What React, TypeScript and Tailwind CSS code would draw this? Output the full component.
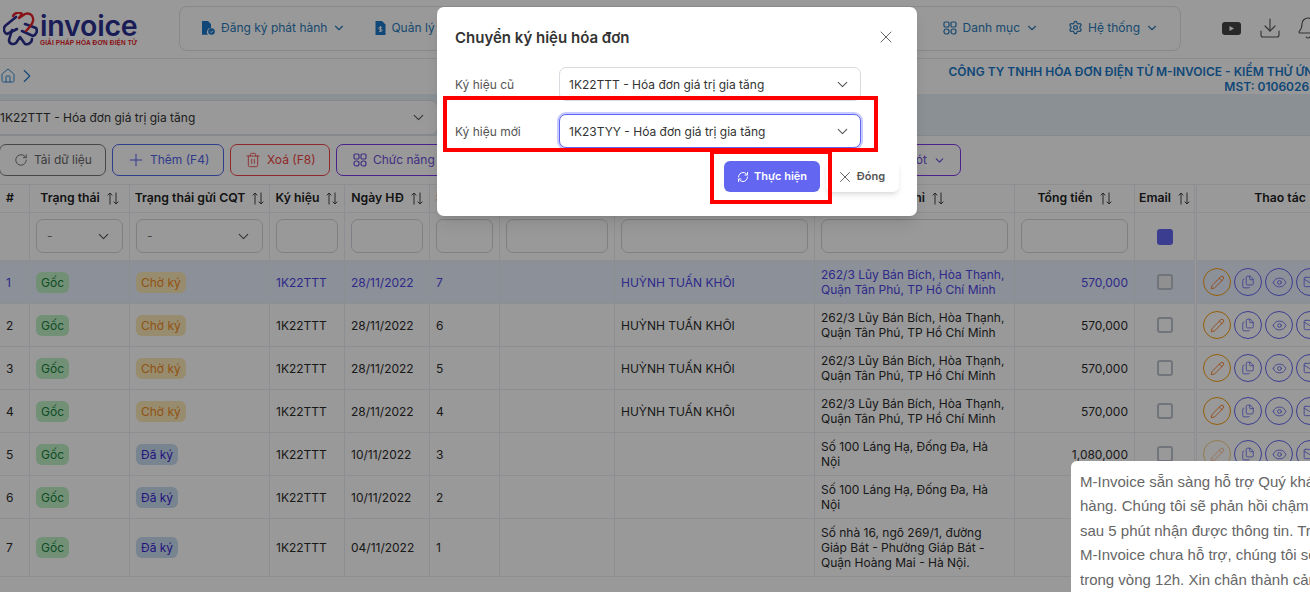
import React from "react";
import { ChevronDown, ChevronRight, Settings, Download, Bell, House, RotateCw, Plus, Trash2, Pencil, Files, Eye, Mail, RefreshCw, X } from "lucide-react";

const GRID = "grid grid-cols-[30px_100px_140px_75px_85px_70px_115px_200px_200px_120px_60px_169px] w-[1364px]";
const CELL = "border-r border-b border-[#e9edf3] px-[6px] flex items-center min-w-0";

function Sort() {
  return (
    <svg width="12" height="13" viewBox="0 0 12 13" fill="none" stroke="currentColor" strokeWidth="1" className="shrink-0 text-[#444]">
      <path d="M3 12.500V1M0.700 3.400 3 1l2.300 2.400" />
      <path d="M9 .5V12M6.700 9.600 9 12l2.300-2.400" />
    </svg>
  );
}

function Grid4({ className = "" }: { className?: string }) {
  return (
    <svg width="14" height="14" viewBox="0 0 14 14" fill="none" stroke="currentColor" strokeWidth="1.200" className={`shrink-0 ${className}`}>
      <rect x="1" y="1" width="5" height="5" rx="1.200" />
      <rect x="8" y="1" width="5" height="5" rx="1.200" />
      <rect x="1" y="8" width="5" height="5" rx="2.200" />
      <rect x="8" y="8" width="5" height="5" rx="2.200" />
    </svg>
  );
}

function FileCheckSolid() {
  return (
    <svg width="14" height="14" viewBox="0 0 14 14" className="text-[#1a78c8]">
      <path fill="currentColor" d="M1 0h6l3 3v4a4 4 0 0 0-3 6.800H1z" />
      <circle cx="10.500" cy="10.500" r="3.300" fill="currentColor" />
      <path d="M9 10.500l1.100 1.100 2-2" stroke="#fff" strokeWidth="1" fill="none" />
    </svg>
  );
}

function FileDollar() {
  return (
    <svg width="11" height="14" viewBox="0 0 11 14" className="text-[#1a78c8]">
      <path fill="currentColor" d="M1 0h6l3.500 3.500V14H.5V0z" />
      <path d="M5.500 5v6M7 6.300H4.800a1 1 0 0 0 0 2h1.400a1 1 0 0 1 0 2H4" stroke="#fff" strokeWidth=".9" fill="none" />
    </svg>
  );
}

function Logo() {
  return (
    <div className="flex items-center w-[179px] pl-[3px] shrink-0">
      <svg width="35" height="34" viewBox="0 0 35 34" fill="none" strokeLinecap="round" strokeLinejoin="round" className="shrink-0">
        <path d="M13 5 2 14c-2 3-1 7 2 8l10-5" stroke="#2b2f8f" strokeWidth="2.600" />
        <path d="M9 18 6 28c0 4 4 5 7 3l4-6 5 7c4 1 7-2 7-5" stroke="#2b2f8f" strokeWidth="2.600" />
        <path d="M22 12l11 4c2 3 0 7-3 8l-11-5" stroke="#2b2f8f" strokeWidth="2.600" />
        <path d="M10 4c2-4 7-4 9-2l-3 4 6-4c5-2 9 2 8 7-1 4-4 7-7 10" stroke="#e3202a" strokeWidth="2.400" />
      </svg>
      <div className="flex flex-col ml-[2px] mt-[3px]">
        <span className="font-semibold text-[28.500px] leading-[22px] tracking-[-0.2px] text-[#2b2f8f]">invoice</span>
        <span className="font-['Liberation_Sans',sans-serif] font-bold text-[6.500px] leading-[9px] tracking-[0.12px] text-[#e3202a] whitespace-nowrap mt-[1px]">GIẢI PHÁP HÓA ĐƠN ĐIỆN TỬ</span>
      </div>
    </div>
  );
}

function Nav({ icon, label }: { icon: React.ReactNode; label: string }) {
  return (
    <div className="flex items-center text-[12px] text-[#2a7ab8] whitespace-nowrap">
      <span className="w-[20px] flex">{icon}</span>
      <span>{label}</span>
      <ChevronDown size={14} className="ml-[5px] shrink-0" />
    </div>
  );
}

function Btn({ cls, icon, label }: { cls: string; icon: React.ReactNode; label: string }) {
  return (
    <div className={`h-[32px] border rounded-[7px] flex items-center text-[12px] whitespace-nowrap shrink-0 ${cls}`}>
      {icon}
      <span>{label}</span>
    </div>
  );
}

function SelectBox({ text, focus }: { text: string; focus?: boolean }) {
  return (
    <div className={`w-[302px] h-[34px] rounded-[7px] border bg-white flex items-center justify-between pl-[9px] pr-[9px] text-[12px] text-[#333] ${focus ? "border-[#6366f1] ring-2 ring-[#c7cbff]" : "border-[#d8dbe0]"}`}>
      <span className="whitespace-nowrap pt-[1px]">{text}</span>
      <ChevronDown size={17} strokeWidth={1.500} className="text-[#555] shrink-0" />
    </div>
  );
}

function Head({ label, left, right }: { label?: string; left?: boolean; right?: boolean }) {
  return (
    <div className={`${CELL} h-[28px] font-semibold text-[12.250px] text-[#222] gap-[7px] whitespace-nowrap ${left ? "" : "justify-center"} ${right ? "ml-[1px] border-l" : ""}`}>
      <span>{label}</span>
      {label && !left && !right && <Sort />}
    </div>
  );
}

function FilterInput({ select }: { select?: boolean }) {
  return (
    <div className={`${CELL} h-[48px] pb-[1px]`}>
      <div className="w-full h-[34px] rounded-[7px] border border-[#d3d6db] bg-white flex items-center justify-between px-[10px] text-[#777] text-[12px]">
        {select && <span>-</span>}
        {select && <ChevronDown size={17} strokeWidth={1.500} className="text-[#555] shrink-0" />}
      </div>
    </div>
  );
}

function Badge({ text, cls }: { text: string; cls: string }) {
  return <span className={`h-[21px] px-[5px] rounded-[6px] flex items-center text-[12px] whitespace-nowrap ${cls}`}>{text}</span>;
}

function Action({ children, orange, faded }: { children: React.ReactNode; orange?: boolean; faded?: boolean }) {
  return (
    <span className={`w-[28px] h-[28px] shrink-0 rounded-full border flex items-center justify-center ${orange ? "border-[#f59e0b] text-[#f97316]" : "border-[#6366f1] text-[#6366f1]"} ${faded ? "opacity-50" : ""}`}>
      {children}
    </span>
  );
}

const rows = [
  { n: 1, s: "cho", d: "28/11/2022", so: 7, name: "HUỲNH TUẤN KHÔI", addr: "262/3 Lũy Bán Bích, Hòa Thạnh, Quận Tân Phú, TP Hồ Chí Minh", total: "570,000", h: "h-[43px]" },
  { n: 2, s: "cho", d: "28/11/2022", so: 6, name: "HUỲNH TUẤN KHÔI", addr: "262/3 Lũy Bán Bích, Hòa Thạnh, Quận Tân Phú, TP Hồ Chí Minh", total: "570,000", h: "h-[43px]" },
  { n: 3, s: "cho", d: "28/11/2022", so: 5, name: "HUỲNH TUẤN KHÔI", addr: "262/3 Lũy Bán Bích, Hòa Thạnh, Quận Tân Phú, TP Hồ Chí Minh", total: "570,000", h: "h-[43px]" },
  { n: 4, s: "cho", d: "28/11/2022", so: 4, name: "HUỲNH TUẤN KHÔI", addr: "262/3 Lũy Bán Bích, Hòa Thạnh, Quận Tân Phú, TP Hồ Chí Minh", total: "570,000", h: "h-[43px]" },
  { n: 5, s: "da", d: "10/11/2022", so: 3, name: "", addr: "Số 100 Láng Hạ, Đống Đa, Hà Nội", total: "1,080,000", h: "h-[43px]" },
  { n: 6, s: "da", d: "10/11/2022", so: 2, name: "", addr: "Số 100 Láng Hạ, Đống Đa, Hà Nội", total: "", h: "h-[43px]" },
  { n: 7, s: "da", d: "04/11/2022", so: 1, name: "", addr: "Số nhà 16, ngõ 269/1, đường Giáp Bát - Phường Giáp Bát - Quận Hoàng Mai - Hà Nội.", total: "", h: "h-[58px]" },
];

function Row({ r }: { r: (typeof rows)[number] }) {
  const active = r.n === 1;
  const signed = r.s === "da";
  const c = `${CELL} ${r.h} ${active ? "bg-[#e9f0ff] text-[#4f46e5]" : ""}`;
  return (
    <div className={`${GRID} text-[12px] leading-[15px] text-[#2b2b2b]`}>
      <div className={c}>{r.n}</div>
      <div className={c}><Badge text="Gốc" cls="bg-[#bff0c4] text-[#15803d]" /></div>
      <div className={c}>
        {r.s === "cho" ? <Badge text="Chờ ký" cls="bg-[#fde9b8] text-[#f08a24]" /> : <Badge text="Đã ký" cls="bg-[#c8dcf0] text-[#3b1fd1]" />}
      </div>
      <div className={c}>1K22TTT</div>
      <div className={c}>{r.d}</div>
      <div className={c}>{r.so}</div>
      <div className={c}></div>
      <div className={c}>{r.name}</div>
      <div className={c}>{r.addr}</div>
      <div className={`${c} justify-end`}>{r.total}</div>
      <div className={`${c} justify-center`}>
        {!(r.n > 5) && <span className={`w-[16px] h-[16px] rounded-[3px] border-2 border-[#bcc2cb] ${active ? "bg-[#f0f0f0]" : "bg-white"}`} />}
      </div>
      <div className={`${c} ml-[1px] border-l gap-[3px] overflow-hidden`}>
        {r.n <= 5 && (
          <>
            <Action orange faded={signed}><Pencil size={15} strokeWidth={1.400} /></Action>
            <Action><Files size={14} strokeWidth={1.400} /></Action>
            <Action><Eye size={15} strokeWidth={1.400} /></Action>
            <Action><Mail size={14} strokeWidth={1.400} /></Action>
          </>
        )}
      </div>
    </div>
  );
}

export default function App() {
  return (
    <div className="relative w-[1310px] h-[592px] overflow-hidden bg-white font-[Inter,sans-serif]">
      <header className="h-[59px] flex items-start border-b border-[#e3e6ea]">
        <div className="h-[58px] flex items-center"><Logo /></div>
        <nav className="mt-[6px] h-[45px] w-[1002px] border border-[#dfe3e8] rounded-[8px] flex items-center justify-between pl-[21px] pr-[21px] pb-[2px] shrink-0">
          <div className="flex items-center gap-[29px]">
            <Nav icon={<FileCheckSolid />} label="Đăng ký phát hành" />
            <div className="flex items-center text-[12px] text-[#2a7ab8] whitespace-nowrap gap-[5px]"><FileDollar /><span>Quản lý hóa đơn</span></div>
          </div>
          <div className="flex items-center gap-[29px]">
            <Nav icon={<Grid4 />} label="Danh mục" />
            <Nav icon={<Settings size={15} className="shrink-0" />} label="Hệ thống" />
          </div>
        </nav>
        <div className="flex items-center ml-[41px] mt-[16px] text-[#555] shrink-0">
          <svg width="19" height="13" viewBox="0 0 19 13" className="shrink-0 mr-[17px]">
            <rect width="19" height="13" rx="3" fill="#444" />
            <path d="M7.500 4l4.500 2.500L7.500 9z" fill="#fff" />
          </svg>
          <Download size={24} strokeWidth={1.100} className="shrink-0 mr-[14px]" />
          <Bell size={24} strokeWidth={1.100} className="shrink-0" />
        </div>
      </header>

      <div className="h-[35px] w-[1361px] flex items-start justify-between">
        <div className="flex items-center h-[24px] mt-[5px] text-[#1a78c8]">
          <House size={16} strokeWidth={1.300} className="shrink-0" />
          <ChevronRight size={22} strokeWidth={1.200} className="shrink-0" />
        </div>
        <div className="text-right font-semibold text-[12px] leading-[15px] text-[#1a78c8] mt-[5px] whitespace-nowrap">
          <div>CÔNG TY TNHH HÓA ĐƠN ĐIỆN TỬ M-INVOICE - KIỂM THỬ ỨNG DỤNG</div>
          <div>MST: 0106026495-999</div>
        </div>
      </div>

      <div className="h-[42px] bg-[#e6f0f5] border-b border-[#dfe4e9] pt-[6px]">
        <div className="w-[438px] h-[35px] bg-white border border-[#dfe2e6] border-l-0 rounded-r-[7px] flex items-center justify-between pr-[10px] text-[12px] text-[#333]">
          <span className="whitespace-nowrap">1K22TTT - Hóa đơn giá trị gia tăng</span>
          <ChevronDown size={17} strokeWidth={1.500} className="text-[#555] shrink-0" />
        </div>
      </div>

      <div className="h-[48px] flex items-start pt-[8px] gap-[6px] -ml-[1px]">
        <Btn cls="border-[#777] text-[#666] w-[107px] pl-[14px] gap-[6px]" icon={<RotateCw size={14} strokeWidth={1.500} className="shrink-0" />} label="Tải dữ liệu" />
        <Btn cls="border-[#4f63e8] text-[#4f63e8] w-[112px] pl-[13px] gap-[4px]" icon={<Plus size={20} strokeWidth={1.200} className="shrink-0" />} label="Thêm (F4)" />
        <Btn cls="border-[#ef4444] text-[#ef4444] w-[100px] pl-[14px] gap-[6px]" icon={<Trash2 size={16} strokeWidth={1.300} className="shrink-0" />} label="Xoá (F8)" />
        <div className="h-[32px] w-[625px] border border-[#7c3aed] text-[#6d4fd8] rounded-[7px] flex items-center justify-between pl-[16px] pr-[14px] text-[12px] whitespace-nowrap shrink-0">
          <div className="flex items-center gap-[6px]"><Grid4 /><span>Chức năng</span></div>
          <div className="flex items-center gap-[6px]"><span>Hóa đơn sót</span><ChevronDown size={13} className="shrink-0" /></div>
        </div>
      </div>

      <div className="border-t border-[#e9edf3] w-[1364px]">
        <div className={GRID}>
          <Head label="#" left />
          <Head label="Trạng thái" />
          <Head label="Trạng thái gửi CQT" />
          <Head label="Ký hiệu" />
          <Head label="Ngày HĐ" />
          <Head label="Số HĐ" left />
          <Head label="Mã CQT" />
          <Head label="Tên khách hàng" />
          <Head label="Địa chỉ" />
          <Head label="Tổng tiền" />
          <Head label="Email" />
          <Head label="Thao tác" right />
        </div>
        <div className={GRID}>
          <div className={`${CELL} h-[48px]`} />
          <FilterInput select />
          <FilterInput select />
          <FilterInput />
          <FilterInput />
          <FilterInput />
          <FilterInput />
          <FilterInput />
          <FilterInput />
          <FilterInput />
          <div className={`${CELL} h-[48px] justify-center`}><span className="w-[16px] h-[16px] rounded-[3px] bg-[#6366f1]" /></div>
          <div className={`${CELL} h-[48px] ml-[1px] border-l`} />
        </div>
        {rows.map((r) => <Row key={r.n} r={r} />)}
      </div>

      <div className="absolute inset-0 bg-black/40" />

      <div className="absolute left-[1071px] top-[461px] w-[300px] h-[140px] bg-white rounded-tl-[6px] pl-[9px] pt-[9px] font-['Liberation_Sans',sans-serif] text-[15px] leading-[24.400px] text-[#666] whitespace-nowrap">
        <div>M-Invoice sẵn sàng hỗ trợ Quý khách</div>
        <div>hàng. Chúng tôi sẽ phản hồi chậm nhất</div>
        <div>sau 5 phút nhận được thông tin. Trường hợp</div>
        <div>M-Invoice chưa hỗ trợ, chúng tôi sẽ phản hồi</div>
        <div>trong vòng 12h. Xin chân thành cảm ơn</div>
      </div>

      <div className="absolute left-[437px] top-[7px] w-[480px] h-[209px] bg-white rounded-[7px] shadow-lg px-[18px]">
        <div className="h-[60px] pt-[2px] flex items-center justify-between">
          <span className="font-semibold text-[15px] text-[#333]">Chuyển ký hiệu hóa đơn</span>
          <X size={20} strokeWidth={1.100} className="text-[#555] mr-[3px] mb-[2px] shrink-0" />
        </div>
        <div className="flex flex-col gap-[13px]">
          <div className="flex items-center">
            <span className="w-[104px] text-[12px] text-[#555] pt-[1px]">Ký hiệu cũ</span>
            <SelectBox text="1K22TTT - Hóa đơn giá trị gia tăng" />
          </div>
          <div className="flex items-center">
            <span className="w-[104px] text-[12px] text-[#555] pt-[1px]">Ký hiệu mới</span>
            <SelectBox text="1K23TYY - Hóa đơn giá trị gia tăng" focus />
          </div>
        </div>
        <div className="flex justify-end gap-[6px] mt-[13px]">
          <div className="w-[96px] h-[31px] rounded-[6px] bg-[#6366f1] text-white font-semibold text-[11px] flex items-center justify-center gap-[5px]">
            <RefreshCw size={12} className="shrink-0" />
            <span>Thực hiện</span>
          </div>
          <div className="w-[73px] h-[31px] rounded-[6px] bg-white shadow-md text-[#555] font-semibold text-[11px] flex items-center justify-center gap-[3px] pr-[4px]">
            <X size={18} strokeWidth={1.200} className="shrink-0" />
            <span>Đóng</span>
          </div>
        </div>
      </div>

      <div className="absolute left-[443px] top-[96px] w-[435px] h-[56px] border-[4px] border-[#ff0000]" />
      <div className="absolute left-[710px] top-[150px] w-[122px] h-[54px] border-[4px] border-[#ff0000]" />
    </div>
  );
}
